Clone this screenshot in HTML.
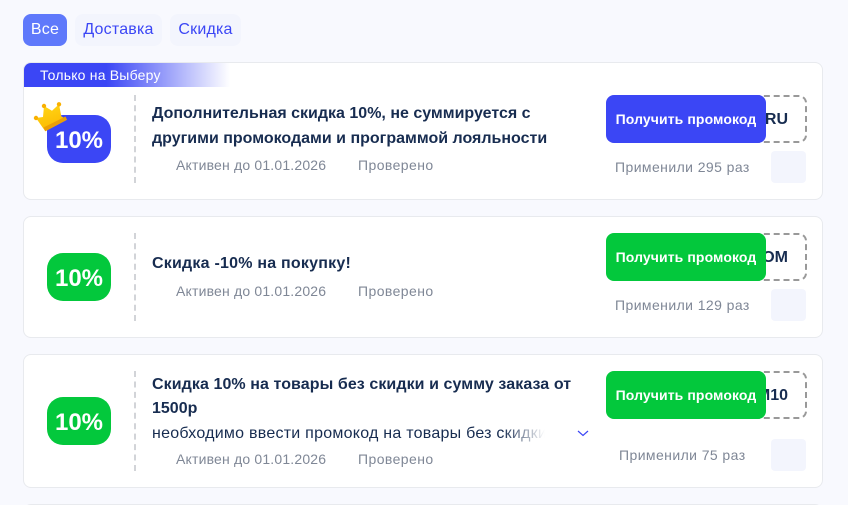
<!DOCTYPE html>
<html><head><meta charset="utf-8"><style>
html,body{margin:0;padding:0;background:#f8f9fe}
#w{position:relative;width:848px;height:505px;overflow:hidden;background:#f8f9fe;font-family:"Liberation Sans","DejaVu Sans",sans-serif}
.a{position:absolute;white-space:nowrap}
.tab{top:14px;height:32px;line-height:32px;border-radius:8px;background:#f3f5fd;color:#3b46f5;font-size:16px;text-align:center;letter-spacing:.2px}
.card{left:23px;width:798px;background:#fff;border:1px solid #e8eaee;border-radius:8px;box-sizing:content-box}
.badge{left:47px;width:64px;height:48px;border-radius:16px;color:#fff;font-size:24px;font-weight:bold;line-height:51px;text-align:center}
.dash{left:134px;width:0;border-left:2px dashed #d2d4d8}
.t{left:152px;font-size:16px;font-weight:bold;color:#172c50;letter-spacing:0;line-height:24px}
.m{font-size:14px;color:#7f8796;letter-spacing:.42px;line-height:20px}
.d{letter-spacing:.18px}
.code{left:746px;width:57px;height:44px;border:2px dashed #999;border-radius:8px;box-sizing:content-box}
.ct{right:60px;font-size:16px;font-weight:bold;color:#172c50;line-height:24px}
.btn{left:606px;width:160px;height:48px;border-radius:8px;color:#fff;font-size:14px;font-weight:bold;line-height:48px;text-align:center;letter-spacing:.1px}
.sq{left:771px;width:35px;height:32px;border-radius:4px;background:#f3f5fd}
</style></head><body><div id="w">
<div class="a tab" style="left:23px;width:44px;background:#5f79fb;color:#fff">Все</div>
<div class="a tab" style="left:75px;width:87px">Доставка</div>
<div class="a tab" style="left:170px;width:71px">Скидка</div>

<div class="a card" style="top:62px;height:136px"></div>
<div class="a" style="left:24px;top:63px;width:206px;height:24px;border-radius:7px 0 0 0;background:linear-gradient(90deg,#3b46f5 0,#3b46f5 40%,rgba(59,70,245,0) 100%)"></div>
<div class="a" style="left:40px;top:66px;color:#fff;font-size:14px;line-height:18px;letter-spacing:.2px">Только на Выберу</div>
<div class="a badge" style="top:115px;background:#3b46f5">10%</div>
<svg class="a" style="left:32px;top:101px" width="38" height="34" viewBox="0 0 38 34">
<defs><linearGradient id="g" x1="0" y1="0" x2=".4" y2="1"><stop offset="0" stop-color="#ffd91a"/><stop offset="1" stop-color="#fcb900"/></linearGradient></defs>
<path d="M4 17 L11 16 L12 5 L20 9.700 L27 3.300 L29.300 15.300 L35 18.700 L13.300 30.300 Z" fill="url(#g)"/>
<path d="M11.500 26.500 L33.500 15.500 L35 18.700 L13.300 30.300 Z" fill="#eb9f06"/>
<circle cx="4" cy="17" r="2.200" fill="#f9b000"/><circle cx="12" cy="5" r="2.200" fill="#f9b000"/><circle cx="27" cy="3.300" r="2.200" fill="#f9b000"/>
</svg>
<div class="a dash" style="top:95px;height:88px"></div>
<div class="a t" style="top:102px">Дополнительная скидка 10%, не суммируется с</div>
<div class="a t" style="top:127px">другими промокодами и программой лояльности</div>
<div class="a m d" style="left:176px;top:155px">Активен до 01.01.2026</div>
<div class="a m" style="left:358px;top:155px">Проверено</div>
<div class="a code" style="top:95px"></div>
<div class="a ct" style="top:108px">RU</div>
<div class="a btn" style="top:95px;background:#3b46f5">Получить промокод</div>
<div class="a m" style="left:615px;top:157px">Применили 295 раз</div>
<div class="a sq" style="top:151px"></div>

<div class="a card" style="top:216px;height:120px"></div>
<div class="a badge" style="top:253px;background:#03c83c">10%</div>
<div class="a dash" style="top:233px;height:88px"></div>
<div class="a t" style="top:252px;letter-spacing:.22px">Скидка -10% на покупку!</div>
<div class="a m d" style="left:176px;top:281px">Активен до 01.01.2026</div>
<div class="a m" style="left:358px;top:281px">Проверено</div>
<div class="a code" style="top:233px"></div>
<div class="a ct" style="top:246px">OM</div>
<div class="a btn" style="top:233px;background:#03c83c">Получить промокод</div>
<div class="a m" style="left:615px;top:295px">Применили 129 раз</div>
<div class="a sq" style="top:289px"></div>

<div class="a card" style="top:354px;height:132px"></div>
<div class="a badge" style="top:397px;background:#03c83c">10%</div>
<div class="a dash" style="top:371px;height:100px"></div>
<div class="a t" style="top:373px;letter-spacing:.08px">Скидка 10% на товары без скидки и сумму заказа от</div>
<div class="a t" style="top:397px">1500р</div>
<div class="a t" style="top:422px;font-weight:normal;letter-spacing:.25px;width:394px;overflow:hidden;-webkit-mask-image:linear-gradient(90deg,#000 0,#000 350px,transparent 393px);mask-image:linear-gradient(90deg,#000 0,#000 350px,transparent 393px)">необходимо ввести промокод на товары без скидки</div>
<svg class="a" style="left:576px;top:429px" width="14" height="10" viewBox="0 0 14 10"><path d="M2 2 L7 6.500 L12 2" fill="none" stroke="#3b46f5" stroke-width="1.200"/></svg>
<div class="a m d" style="left:176px;top:449px">Активен до 01.01.2026</div>
<div class="a m" style="left:358px;top:449px">Проверено</div>
<div class="a code" style="top:371px"></div>
<div class="a ct" style="top:384px">M10</div>
<div class="a btn" style="top:371px;background:#03c83c">Получить промокод</div>
<div class="a m" style="left:619px;top:445px">Применили 75 раз</div>
<div class="a sq" style="top:439px"></div>

<div class="a card" style="top:504px;height:20px"></div>
</div></body></html>
